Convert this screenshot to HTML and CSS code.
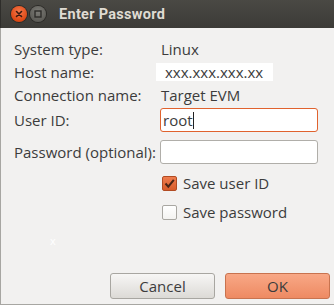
FILE: index.html
```html
<!DOCTYPE html>
<html lang="en">
<head>
    <meta charset="UTF-8">
    <title>Enter Password</title>
    <link rel="stylesheet" href="styles.css">
</head>
<body>
    <div class="window">
        <!-- Title bar -->
        <div class="titlebar">
            <span class="win-btn close-btn">
                <svg width="16" height="16" viewBox="0 0 16 16">
                    <path d="M5.5 5.5 L10.5 10.5 M10.5 5.5 L5.5 10.5" stroke="#3a1a10" stroke-width="1.6" stroke-linecap="round"/>
                </svg>
            </span>
            <span class="win-btn min-btn">
                <svg width="16" height="16" viewBox="0 0 16 16">
                    <rect x="5" y="5" width="6" height="6" fill="none" stroke="#2e2d2a" stroke-width="1.4"/>
                </svg>
            </span>
            <span class="title">Enter Password</span>
        </div>

        <!-- Form -->
        <div class="content">
            <div class="row info">
                <span class="label">System type:</span>
                <span class="value">Linux</span>
            </div>
            <div class="row info">
                <span class="label">Host name:</span>
                <span class="value host">xxx.xxx.xxx.xx</span>
            </div>
            <div class="row info">
                <span class="label">Connection name:</span>
                <span class="value">Target EVM</span>
            </div>
            <div class="row field user-row">
                <span class="label">User ID:</span>
                <div class="input focused">root<span class="caret"></span></div>
            </div>
            <div class="row field pass-row">
                <span class="label">Password (optional):</span>
                <div class="input"></div>
            </div>
            <div class="row check-row first-check">
                <span class="checkbox checked">
                    <svg width="13" height="13" viewBox="0 0 13 13">
                        <path d="M2.5 6.5 L5.3 9.6 L10.8 2.8" fill="none" stroke="#4a2516" stroke-width="2"/>
                    </svg>
                </span>
                <span class="check-label">Save user ID</span>
            </div>
            <div class="row check-row">
                <span class="checkbox"></span>
                <span class="check-label">Save password</span>
            </div>
            <div class="stray">x</div>

            <div class="footer">
                <button class="btn cancel-btn">Cancel</button>
                <button class="btn ok-btn">OK</button>
            </div>
        </div>
    </div>
</body>
</html>
```

FILE: styles.css
```css
/* Basic Styles */
body {
    margin: 0;
    font-family: "Open Sans", "Noto Sans", sans-serif;
    color: #3c3c3c;
    background-color: #f2f1f0;
}

.window {
    width: 334px;
    height: 305px;
    box-sizing: border-box;
    display: flex;
    flex-direction: column;
    background-color: #f2f1f0;
    border-left: 1px solid #a7a6a2;
    border-bottom: 1px solid #a7a6a2;
}

/* Title Bar */
.titlebar {
    height: 28px;
    flex-shrink: 0;
    display: flex;
    align-items: center;
    padding-left: 10px;
    background: linear-gradient(#4a4944, #3c3b37);
    border-left: 1px solid #2e2d2a;
    margin-left: -1px;
}

.win-btn {
    width: 16px;
    height: 16px;
    border-radius: 50%;
    display: flex;
    margin-right: 3px;
}

.close-btn {
    background: radial-gradient(circle at 50% 35%, #f6784b, #dd4814 70%, #b53a10);
    box-shadow: 0 0 0 1px #2b2a27;
}

.min-btn {
    background: radial-gradient(circle at 50% 35%, #7c7b76, #5e5d58 70%, #4d4c48);
    box-shadow: 0 0 0 1px #2b2a27;
}

.title {
    margin-left: 10px;
    font-family: Roboto, "Open Sans", sans-serif;
    font-weight: bold;
    font-size: 14.5px;
    color: #dfdbd2;
    letter-spacing: 0.3px;
}

/* Form Rows */
.content {
    flex: 1;
    display: flex;
    flex-direction: column;
    padding: 9px 4px 5px 13px;
    font-size: 15px;
}

.row {
    display: flex;
    align-items: center;
}

.info {
    height: 23px;
}

.label {
    width: 146px;
    flex-shrink: 0;
}

.value {
    padding-left: 1px;
}

.host {
    background-color: #ffffff;
    margin-left: -4px;
    padding: 0 9px;
    height: 18px;
    line-height: 18px;
    width: 99px;
}

.field {
    height: 24px;
}

.user-row {
    margin-top: 2px;
}

.pass-row {
    margin-top: 8px;
}

.input {
    width: 158px;
    height: 24px;
    box-sizing: border-box;
    border: 1px solid #b0aea9;
    border-radius: 3px;
    background-color: #ffffff;
    display: flex;
    align-items: center;
    padding-left: 2px;
    font-size: 15px;
}

.input.focused {
    border-color: #e0622e;
}

.caret {
    display: inline-block;
    width: 1px;
    height: 17px;
    background-color: #222;
}

/* Checkboxes */
.check-row {
    height: 24px;
    margin-top: 5px;
    padding-left: 148px;
}

.first-check {
    margin-top: 7px;
}

.checkbox {
    width: 13px;
    height: 13px;
    border: 1px solid #a9a7a2;
    border-radius: 2px;
    background: linear-gradient(#ffffff, #f4f3f1);
    margin-right: 6px;
    display: flex;
}

.checkbox.checked {
    border-color: #b24b22;
    background: linear-gradient(#ee7c4e, #d85c2a);
}

.stray {
    color: #ffffff;
    font-size: 11px;
    margin-top: 9px;
    padding-left: 36px;
}

/* Buttons */
.footer {
    margin-top: auto;
    display: flex;
    justify-content: flex-end;
    gap: 10px;
}

.btn {
    width: 105px;
    height: 26px;
    font-family: "Open Sans", "Noto Sans", sans-serif;
    font-size: 15px;
    color: #3c3c3c;
    border-radius: 3px;
    cursor: pointer;
    padding: 0;
}

.cancel-btn {
    background: linear-gradient(#f7f6f5, #dcdad6);
    border: 1px solid #a8a6a1;
}

.ok-btn {
    background: linear-gradient(#f8a886, #ee8a62);
    border: 1px solid #c8734f;
}
```
